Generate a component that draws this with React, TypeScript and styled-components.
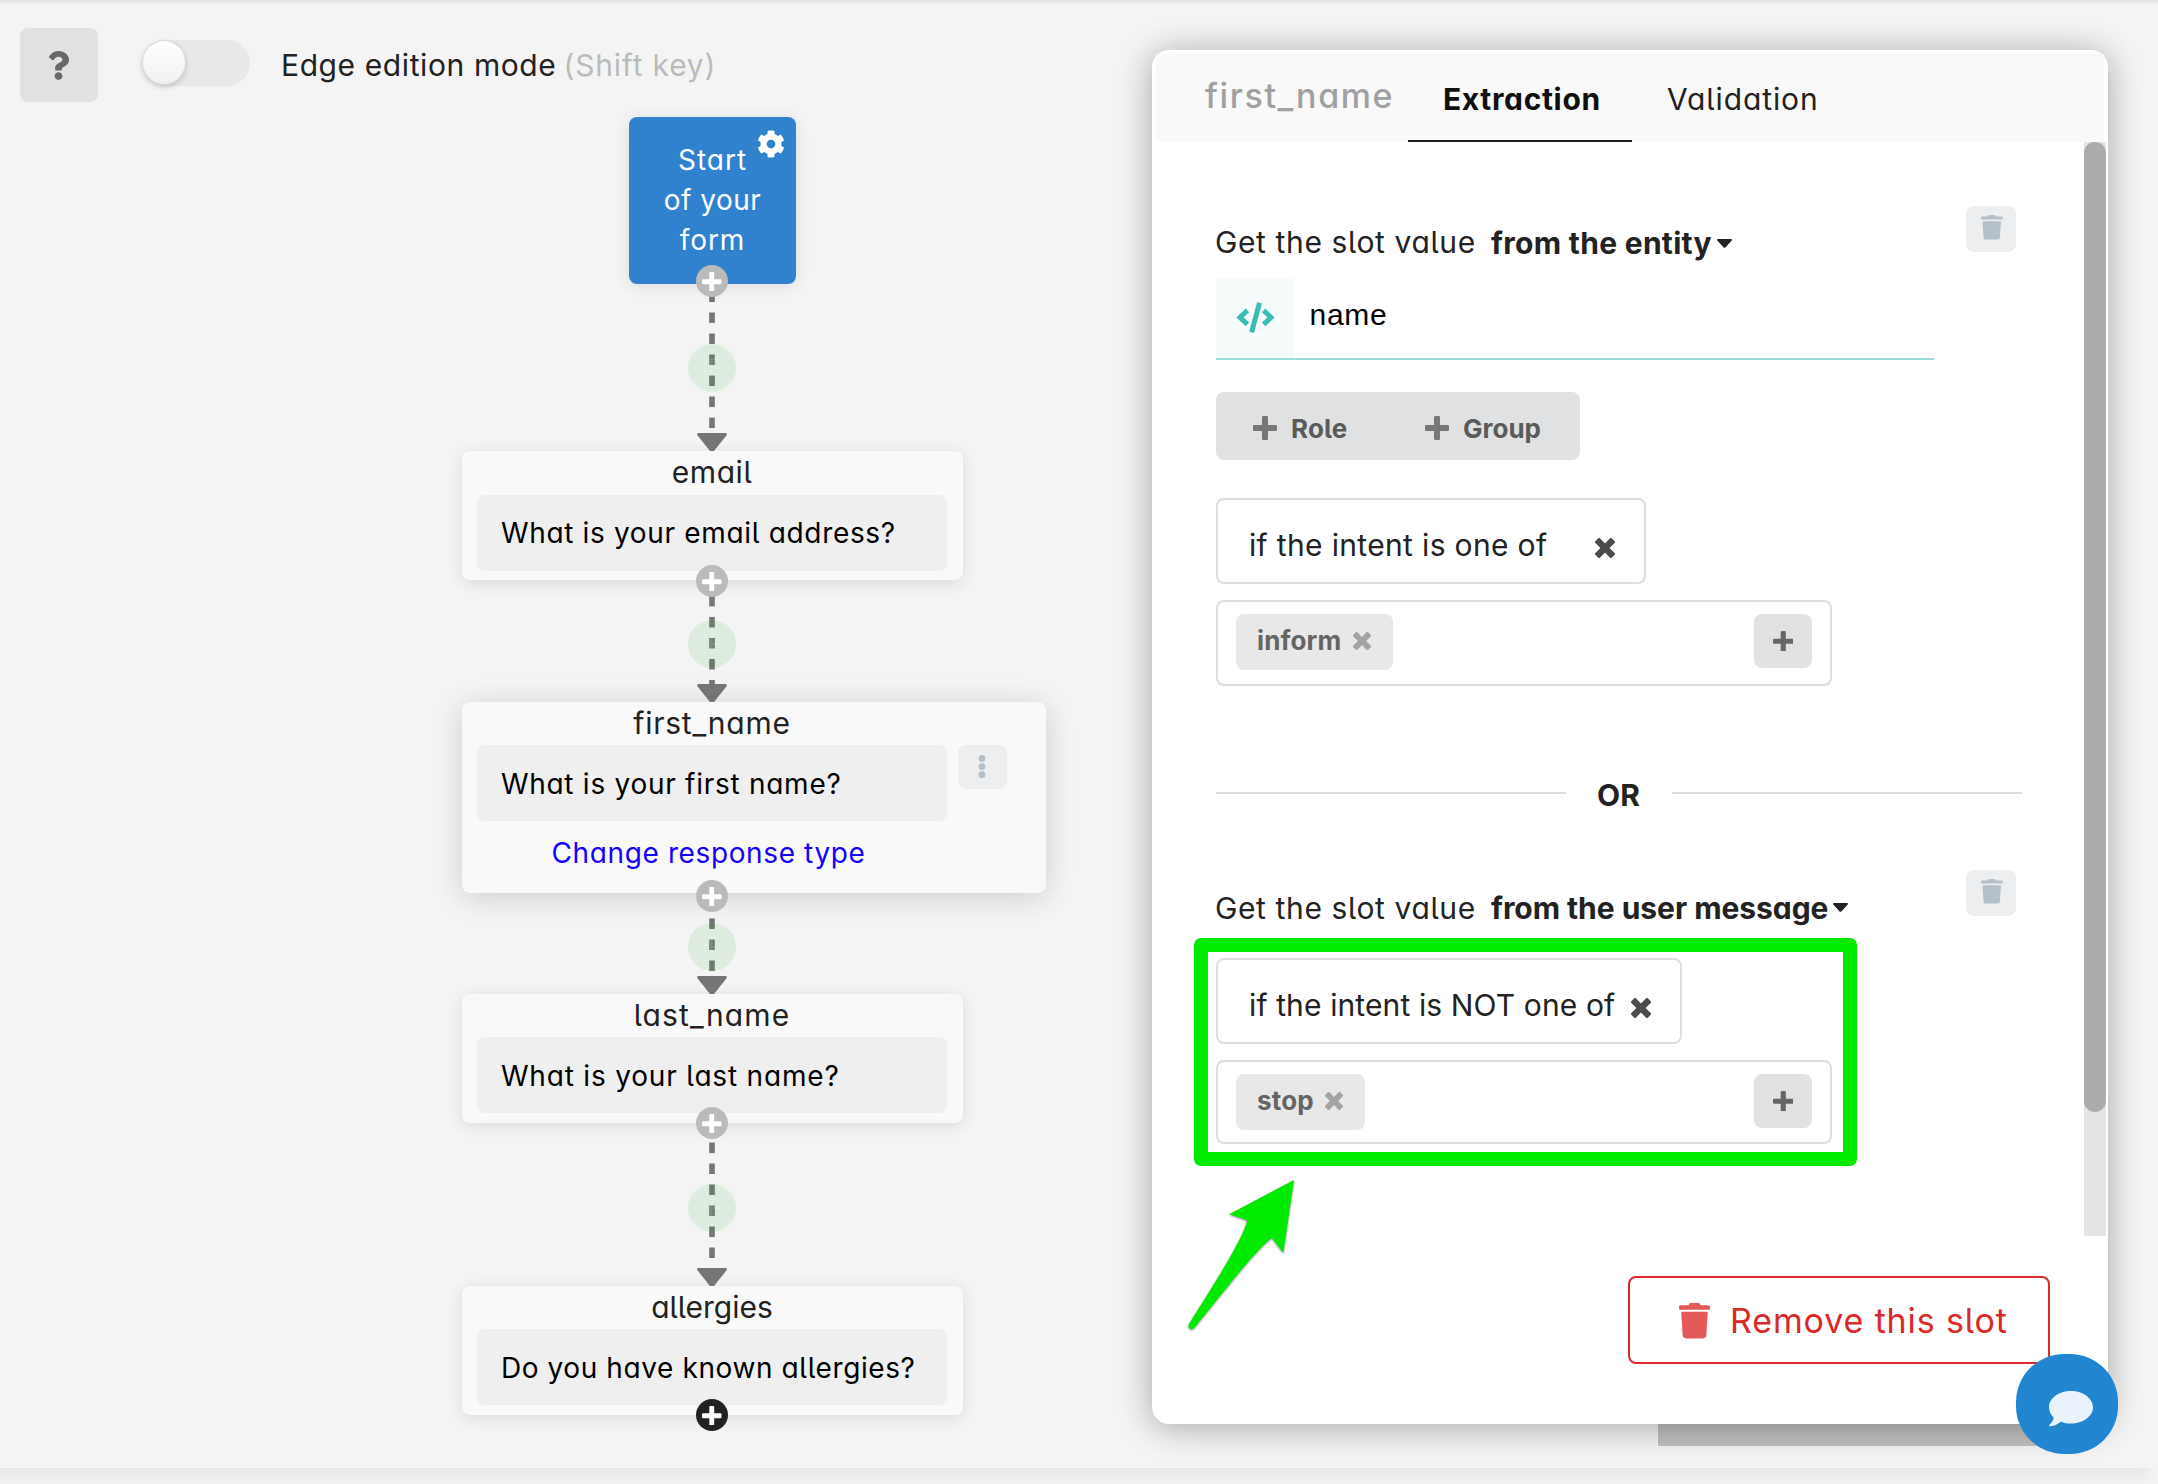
import React from 'react';
import styled, { createGlobalStyle, css } from 'styled-components';
import { FaCog, FaQuestion } from 'react-icons/fa';

const GlobalStyle = createGlobalStyle`
  * { box-sizing: border-box; }
  body {
    margin: 0;
    background: #f4f4f4;
    color: #222;
    font-family: Inter, 'Open Sans', sans-serif;
    font-feature-settings: 'cv11', 'cv05';
  }
  svg { display: block; flex: none; }
`;

/* ---------- text ---------- */

const Text = styled.span<{ $size?: number; $weight?: number; $track?: number; $color?: string }>`
  font-size: ${(p) => p.$size ?? 30}px;
  font-weight: ${(p) => p.$weight ?? 400};
  letter-spacing: ${(p) => p.$track ?? 0}px;
  color: ${(p) => p.$color ?? 'inherit'};
  line-height: 40px;
  white-space: nowrap;
`;

const Hint = styled(Text)`
  margin-left: -2px;
`;

/* ---------- icons ---------- */

const PlusIcon = ({ size, color }: { size: number; color: string }) => (
  <svg width={size} height={size} viewBox="0 0 24 24" fill={color}>
    <rect x="9" y="0" width="6" height="24" rx="1.3" />
    <rect x="0" y="9" width="24" height="6" rx="1.3" />
  </svg>
);

const TimesIcon = ({ size, color }: { size: number; color: string }) => (
  <svg width={size} height={size} viewBox="0 64 384 384" fill={color}>
    <path d="M323.1 441l53.9-53.9c9.4-9.4 9.4-24.5 0-33.9L279.8 256l97.2-97.2c9.4-9.4 9.4-24.5 0-33.9L323.1 71c-9.4-9.4-24.5-9.4-33.9 0L192 168.2 94.8 71c-9.4-9.4-24.5-9.4-33.9 0L7 124.9c-9.4 9.4-9.4 24.5 0 33.9l97.2 97.2L7 353.2c-9.4 9.4-9.4 24.5 0 33.9L60.9 441c9.4 9.4 24.5 9.4 33.9 0l97.2-97.2 97.2 97.2c9.3 9.3 24.5 9.3 33.9 0z" />
  </svg>
);

const TrashIcon = ({ width, color }: { width: number; color: string }) => (
  <svg width={width} height={(width * 512) / 448} viewBox="0 0 448 512" fill={color}>
    <path d="M0 84V56c0-13.3 10.7-24 24-24h112l9.4-18.7c4-8.2 12.3-13.3 21.4-13.3h114.3c9.1 0 17.4 5.1 21.5 13.3L312 32h112c13.3 0 24 10.7 24 24v28c0 6.6-5.4 12-12 12H12C5.4 96 0 90.6 0 84zm415.2 56.7L394.8 467c-1.6 25.3-22.6 45-47.9 45H101.1c-25.3 0-46.3-19.7-47.9-45L32.8 140.7c-.4-6.9 5.1-12.7 12-12.7h358.5c6.8 0 12.3 5.8 11.9 12.7z" />
  </svg>
);

const CodeIcon = () => (
  <svg width="39" height="32" viewBox="0 0 39 32" fill="none" stroke="#3bbcb6" strokeWidth="5">
    <path d="M11.4 8.4 4 15.4l7.4 7" />
    <path d="M27.6 8.4 35 15.4l-7.4 7" />
    <path d="M23.5 0.8 15.6 30.4" />
  </svg>
);

const CaretIcon = () => (
  <svg width="15" height="9" viewBox="0 0 15 9" fill="#222">
    <path d="M.9 0h13.2c.8 0 1.2.9.6 1.5L8.6 8.2c-.6.7-1.6.7-2.2 0L.3 1.5C-.3.9.1 0 .9 0z" />
  </svg>
);

const DotsIcon = () => (
  <svg width="8" height="28" viewBox="0 0 8 28" fill="#b3c0c9">
    <circle cx="4" cy="5.5" r="3.4" />
    <circle cx="4" cy="13.6" r="3.4" />
    <circle cx="4" cy="21.7" r="3.4" />
  </svg>
);

const ChatIcon = () => (
  <svg width="44" height="36" viewBox="0 0 44 36" fill="#eaf3fb">
    <path d="M22 0C34.2 0 44 7.3 44 16.3S34.2 32.6 22 32.6c-3.8 0-7.3-.7-10.3-1.9C8.8 33 4.8 35.3.8 35.3c-.8 0-.9-.7-.4-1.2 1.700-1.800 4-4.900 4.300-7.600C1.700 23.700 0 20.200 0 16.300 0 7.300 9.800 0 22 0z" />
  </svg>
);

/* ---------- page ---------- */

const Page = styled.div`
  position: relative;
  width: 2158px;
  height: 1484px;
  display: flex;
  overflow: hidden;
  background: #f4f4f4;
`;

const TopShade = styled.div`
  position: absolute;
  inset: 0 0 auto 0;
  height: 5px;
  background: linear-gradient(#e2e2e2, #e8e8e8 40%, #f4f4f4);
`;

const BottomShade = styled.div`
  position: absolute;
  inset: auto 0 0 0;
  height: 16px;
  background: linear-gradient(to right, transparent 2140px, #f4f4f4),
    linear-gradient(#e5e5e5, #ebebeb 30%, #f2f2f2);
`;

const Canvas = styled.main`
  position: relative;
  width: 1152px;
  flex: none;
`;

const Toolbar = styled.div`
  display: flex;
  align-items: center;
  padding: 28px 0 0 20px;
`;

const HelpButton = styled.button`
  width: 78px;
  height: 74px;
  border: 0;
  border-radius: 8px;
  background: #e0e1e2;
  color: #686868;
  padding: 0 1px 0 0;
  display: flex;
  align-items: center;
  justify-content: center;
  margin-right: 45px;
`;

const Toggle = styled.div`
  width: 107px;
  height: 46px;
  border-radius: 23px;
  background: #e8e8e8;
  margin: 0 31px 4px 0;
`;

const Knob = styled.div`
  width: 44px;
  height: 45px;
  margin-left: -1px;
  border-radius: 50%;
  background: linear-gradient(#fff, #f1f1f1);
  border: 1px solid #d8d8d8;
  box-shadow: 0 2px 5px rgba(34, 36, 38, 0.22);
`;

/* ---------- diagram ---------- */

const nodeBox = css<{ $top: number }>`
  position: absolute;
  top: ${(p) => p.$top}px;
  border-radius: 8px;
`;

const StartNode = styled.div<{ $top: number }>`
  ${nodeBox}
  left: 629px;
  width: 167px;
  height: 167px;
  padding-top: 23px;
  background: #3182ce;
  color: #fff;
  display: flex;
  flex-direction: column;
  align-items: center;
  box-shadow: 0 2px 16px rgba(0, 0, 0, 0.1);
`;

const Gear = styled.div`
  position: absolute;
  top: 13px;
  right: 11px;
`;

const Card = styled.section<{ $top: number; $active?: boolean }>`
  ${nodeBox}
  left: 461.5px;
  width: ${(p) => (p.$active ? 584.5 : 501.5)}px;
  height: ${(p) => (p.$active ? 191.7 : 129)}px;
  padding-left: 15px;
  background: #f9f9f9;
  box-shadow: ${(p) =>
    p.$active ? '0 4px 30px rgba(0,0,0,.16)' : '0 3px 16px rgba(0,0,0,.11)'};
`;

const CardTitle = styled.div`
  width: 471px;
  height: 43.7px;
  padding-top: 1.4px;
  text-align: center;
`;

const CardRow = styled.div`
  display: flex;
  gap: 10.5px;
`;

const Question = styled.div`
  width: 470.5px;
  height: 76px;
  border-radius: 8px;
  background: #efefef;
  color: #000;
  padding: 18.6px 0 0 24.4px;
`;

const MenuButton = styled.button`
  width: 49px;
  height: 44px;
  border: 0;
  padding: 0;
  border-radius: 8px;
  background: #eceef0;
  display: flex;
  align-items: center;
  justify-content: center;
`;

const ChangeLink = styled.a`
  display: block;
  padding: 11.4px 0 0 75px;
`;

const AddBadge = styled.div<{ $top: number; $dark?: boolean }>`
  position: absolute;
  left: 696px;
  top: ${(p) => p.$top}px;
  width: 32px;
  height: 32px;
  border-radius: 50%;
  background: ${(p) => (p.$dark ? '#222' : '#bababa')};
  display: flex;
  align-items: center;
  justify-content: center;
`;

const EdgeBox = styled.div<{ $top: number }>`
  position: absolute;
  left: 688px;
  top: ${(p) => p.$top}px;
`;

const ConditionDot = styled.div<{ $top: number }>`
  position: absolute;
  left: 688px;
  top: ${(p) => p.$top}px;
  width: 48px;
  height: 48px;
  border-radius: 50%;
  background: rgba(33, 176, 59, 0.11);
  display: flex;
  align-items: center;
  justify-content: center;
`;

/* A dashed connector; dashes are laid out upwards from `dash`. */
const Edge = ({ top, bottom, dash }: { top: number; bottom: number; dash: number }) => {
  const h = bottom - top;
  return (
    <EdgeBox $top={top}>
      <svg width="48" height={h} viewBox={`0 0 48 ${h}`}>
        <path
          d={`M24 ${h - 12}V0`}
          stroke="#757575"
          strokeWidth="5.6"
          strokeDasharray="10.6 10.4"
          strokeDashoffset={dash}
        />
        <path
          d={`M10.5 ${h - 18}h27c1.3 0 1.8 1.2 1.1 2.2L26 ${h}h-4L9.4 ${h - 15.8}c-.7-1-.2-2.2 1.1-2.2z`}
          fill="#757575"
        />
      </svg>
    </EdgeBox>
  );
};

/* ---------- slot panel ---------- */

const Panel = styled.aside`
  position: relative;
  width: 956px;
  height: 1374px;
  margin-top: 50px;
  padding: 4px;
  border-radius: 17px;
  background: #fff;
  box-shadow: 0 3px 34px rgba(0, 0, 0, 0.33);
`;

const PanelHeader = styled.header`
  height: 88px;
  background: #f9f9f9;
  display: flex;
  align-items: stretch;
`;

const SlotName = styled.div`
  width: 252px;
  padding: 22px 0 0 49px;
`;

const Tab = styled.div<{ $active?: boolean }>`
  padding: 25px 35px 0;
  ${(p) => p.$active && css`width: 224px; text-align: center; border-bottom: 2px solid #1b1c1d;`}
`;

const PanelBody = styled.div`
  height: 1094px;
  margin-right: -2px;
  display: flex;
  justify-content: space-between;
`;

const Rules = styled.div`
  width: 867px;
  padding: 64px 0 0 60px;
`;

const ScrollTrack = styled.div`
  width: 22px;
  background: #e4e4e4;
`;

const ScrollThumb = styled.div`
  height: 970px;
  border-radius: 11px;
  background: #ababab;
`;

const Rule = styled.section`
  display: flex;
`;

const RuleMain = styled.div`
  width: 750px;
  display: flex;
  flex-direction: column;
  align-items: flex-start;
`;

const RuleHead = styled.div<{ $height: number; $lift?: number }>`
  height: ${(p) => p.$height}px;
  padding-bottom: ${(p) => p.$lift ?? 0}px;
  display: flex;
  align-items: center;
`;

const RuleLabel = styled.div`
  width: 276px;
  margin-left: -1px;
  flex: none;
`;

const SourceSelect = styled.div<{ $shift: number }>`
  display: flex;
  align-items: center;
  gap: 5px;
  padding-top: ${(p) => (p.$shift > 0 ? p.$shift : 0)}px;
  padding-bottom: ${(p) => (p.$shift < 0 ? -p.$shift : 0)}px;
`;

const TrashButton = styled.button`
  width: 50px;
  height: 46px;
  border: 0;
  border-radius: 8px;
  padding: 0 0 3px 2px;
  background: #eceef0;
  display: flex;
  align-items: center;
  justify-content: center;
`;

const EntityField = styled.div`
  width: 718px;
  height: 82px;
  border-bottom: 2px solid #99dbd6;
  display: flex;
  align-items: center;
`;

const EntityIcon = styled.div`
  width: 78px;
  height: 80px;
  background: #f6fcfc;
  display: flex;
  align-items: center;
  justify-content: center;
`;

const EntityValue = styled.span`
  padding: 0 0 6px 15.6px;
  font: 30px/40px 'Liberation Sans', Arial, sans-serif;
  letter-spacing: 0.7px;
  color: #000;
`;

const ButtonGroup = styled.div`
  width: 364px;
  height: 68px;
  margin: 32px 0 38px;
  padding: 4px 0 0 37px;
  border-radius: 8px;
  background: #e0e1e2;
  color: #5a5a5a;
  display: flex;
  align-items: center;
`;

const GroupButton = styled.div`
  width: 172px;
  flex: none;
  display: flex;
  align-items: center;
  gap: 14px;
  ${Text} { padding-top: 2px; }
`;

const Condition = styled.div<{ $width: number }>`
  width: ${(p) => p.$width}px;
  height: 86px;
  margin-bottom: 16px;
  padding: 8px 29px 0 31px;
  border: 2px solid #dedede;
  border-radius: 8px;
  display: flex;
  align-items: center;
  justify-content: space-between;
  svg { margin-top: 6px; }
`;

const IntentBox = styled.div<{ $height: number }>`
  width: 616px;
  height: ${(p) => p.$height}px;
  padding: 12px 18px;
  border: 2px solid #dedede;
  border-radius: 8px;
  display: flex;
  justify-content: space-between;
`;

const IntentLabel = styled.div`
  height: 56px;
  padding: 0 22px 3px 21px;
  border-radius: 8px;
  background: #e8e8e8;
  color: #646464;
  display: flex;
  align-items: center;
  gap: 11.5px;
`;

const AddIntent = styled.button`
  width: 58px;
  height: 54px;
  border: 0;
  padding: 0;
  border-radius: 8px;
  background: #e0e1e2;
  display: flex;
  align-items: center;
  justify-content: center;
`;

const OrDivider = styled.div`
  width: 806px;
  height: 184px;
  padding: 34px 0 0;
  display: flex;
  align-items: center;
  justify-content: space-between;
`;

const OrLine = styled.div`
  width: 350px;
  height: 2px;
  margin-bottom: 4px;
  background: #dcdcdc;
`;

const OrText = styled(Text)`
  margin-right: 1px;
`;

const PanelFooter = styled.footer`
  display: flex;
  justify-content: flex-end;
  padding: 40px 54px 0 0;
`;

const RemoveButton = styled.button`
  width: 422px;
  height: 88px;
  padding: 2px 0 0 49px;
  border: 2px solid #db2828;
  border-radius: 8px;
  background: #fff;
  font-family: inherit;
  font-feature-settings: inherit;
  display: flex;
  align-items: center;
  gap: 20px;
`;

/* ---------- overlays ---------- */

const HorizontalThumb = styled.div`
  position: absolute;
  left: 1658px;
  top: 1420px;
  width: 400px;
  height: 26px;
  background: #c1c1c1;
`;

const Highlight = styled.div`
  position: absolute;
  left: 1194px;
  top: 938px;
  width: 663px;
  height: 228px;
  border: 14px solid #00ea00;
  border-radius: 7px;
`;

const Arrow = styled.svg`
  position: absolute;
  left: 1180px;
  top: 1170px;
  filter: drop-shadow(0 1px 1px rgba(0, 0, 0, 0.45));
`;

const ChatButton = styled.button`
  position: absolute;
  left: 2016px;
  top: 1354px;
  width: 102px;
  height: 100px;
  border: 0;
  border-radius: 48px;
  background: #2185d0;
  padding: 10px 0 0 7px;
  display: flex;
  align-items: center;
  justify-content: center;
`;

const cards = [
  { top: 451, name: 'email', track: 0.6, question: 'What is your email address?', qTrack: 0.67 },
  { top: 701.6, name: 'first_name', track: 0.75, question: 'What is your first name?', qTrack: 0.73, active: true },
  { top: 993.7, name: 'last_name', track: 1.15, question: 'What is your last name?', qTrack: 0.82 },
  { top: 1285.7, name: 'allergies', track: 0, question: 'Do you have known allergies?', qTrack: 0.6 },
];

const edges = [
  { top: 284, bottom: 451, dash: -11, dot: 344 },
  { top: 580, bottom: 702, dash: 0.6, dot: 619.5 },
  { top: 914, bottom: 994, dash: -11, dot: 922.5 },
  { top: 1141, bottom: 1286, dash: 5, dot: 1183.5 },
];

const badges = [
  { top: 265.3 },
  { top: 565.3 },
  { top: 880.3 },
  { top: 1107.3 },
  { top: 1399.3, dark: true },
];

export default function App() {
  return (
    <>
      <GlobalStyle />
      <Page>
        <TopShade />
        <BottomShade />
        <HorizontalThumb />
        <Canvas>
          <Toolbar>
            <HelpButton>
              <FaQuestion size={29} />
            </HelpButton>
            <Toggle>
              <Knob />
            </Toggle>
            <Text $track={0.6}>
              Edge edition mode <Hint $track={0.8} $color="#bbb">(Shift key)</Hint>
            </Text>
          </Toolbar>

          <StartNode $top={117}>
            <Text $size={28} $track={1}>Start</Text>
            <Text $size={28} $track={0.5}>of your</Text>
            <Text $size={28} $track={0.9}>form</Text>
            <Gear>
              <FaCog size={28} />
            </Gear>
          </StartNode>

          {cards.map((c) => (
            <Card key={c.name} $top={c.top} $active={c.active}>
              <CardTitle>
                <Text $track={c.track}>{c.name}</Text>
              </CardTitle>
              <CardRow>
                <Question>
                  <Text $size={28} $track={c.qTrack}>{c.question}</Text>
                </Question>
                {c.active && (
                  <MenuButton>
                    <DotsIcon />
                  </MenuButton>
                )}
              </CardRow>
              {c.active && (
                <ChangeLink>
                  <Text $size={28} $track={0.62} $color="#1400ff">Change response type</Text>
                </ChangeLink>
              )}
            </Card>
          ))}

          {edges.map((e) => (
            <React.Fragment key={e.top}>
              <Edge top={e.top} bottom={e.bottom} dash={e.dash} />
              <ConditionDot $top={e.dot}>
                <Text $size={26} $color="rgba(255,255,255,.12)">IF</Text>
              </ConditionDot>
            </React.Fragment>
          ))}

          {badges.map((b) => (
            <AddBadge key={b.top} $top={b.top} $dark={b.dark}>
              <PlusIcon size={19.5} color="#fff" />
            </AddBadge>
          ))}
        </Canvas>

        <Panel>
          <PanelHeader>
            <SlotName>
              <Text $size={34} $weight={500} $track={1.6} $color="#a0a0a0">first_name</Text>
            </SlotName>
            <Tab $active>
              <Text $weight={650} $track={0.65} $color="#0f0f10">Extraction</Text>
            </Tab>
            <Tab>
              <Text $track={0.9}>Validation</Text>
            </Tab>
          </PanelHeader>

          <PanelBody>
            <Rules>
              <Rule>
                <RuleMain>
                  <RuleHead $height={72}>
                    <RuleLabel>
                      <Text $track={0.62}>Get the slot value</Text>
                    </RuleLabel>
                    <SourceSelect $shift={2}>
                      <Text $weight={700} $track={0.3}>from the entity</Text>
                      <CaretIcon />
                    </SourceSelect>
                  </RuleHead>
                  <EntityField>
                    <EntityIcon>
                      <CodeIcon />
                    </EntityIcon>
                    <EntityValue>name</EntityValue>
                  </EntityField>
                  <ButtonGroup>
                    <GroupButton>
                      <PlusIcon size={24} color="#777" />
                      <Text $size={26} $weight={700} $track={0.2}>Role</Text>
                    </GroupButton>
                    <GroupButton>
                      <PlusIcon size={24} color="#777" />
                      <Text $size={26} $weight={700} $track={0}>Group</Text>
                    </GroupButton>
                  </ButtonGroup>
                  <Condition $width={430}>
                    <Text $track={0.34}>if the intent is one of</Text>
                    <TimesIcon size={20} color="#4b4b4b" />
                  </Condition>
                  <IntentBox $height={86}>
                    <IntentLabel>
                      <Text $size={26} $weight={700} $track={0.15}>inform</Text>
                      <TimesIcon size={18} color="#a3a3a3" />
                    </IntentLabel>
                    <AddIntent>
                      <PlusIcon size={20.5} color="#666" />
                    </AddIntent>
                  </IntentBox>
                </RuleMain>
                <TrashButton>
                  <TrashIcon width={21.5} color="#b3c0c9" />
                </TrashButton>
              </Rule>

              <OrDivider>
                <OrLine />
                <OrText $weight={700}>OR</OrText>
                <OrLine />
              </OrDivider>

              <Rule>
                <RuleMain>
                  <RuleHead $height={88} $lift={12}>
                    <RuleLabel>
                      <Text $track={0.62}>Get the slot value</Text>
                    </RuleLabel>
                    <SourceSelect $shift={-1}>
                      <Text $weight={700} $track={-0.04}>from the user message</Text>
                      <CaretIcon />
                    </SourceSelect>
                  </RuleHead>
                  <Condition $width={466}>
                    <Text $track={0.12}>if the intent is NOT one of</Text>
                    <TimesIcon size={20} color="#4b4b4b" />
                  </Condition>
                  <IntentBox $height={84}>
                    <IntentLabel>
                      <Text $size={26} $weight={700} $track={0.2}>stop</Text>
                      <TimesIcon size={18} color="#a3a3a3" />
                    </IntentLabel>
                    <AddIntent>
                      <PlusIcon size={20.5} color="#666" />
                    </AddIntent>
                  </IntentBox>
                </RuleMain>
                <TrashButton>
                  <TrashIcon width={21.5} color="#b3c0c9" />
                </TrashButton>
              </Rule>
            </Rules>
            <ScrollTrack>
              <ScrollThumb />
            </ScrollTrack>
          </PanelBody>

          <PanelFooter>
            <RemoveButton>
              <TrashIcon width={31} color="#e45959" />
              <Text $size={34} $track={0.87} $color="#db2828">Remove this slot</Text>
            </RemoveButton>
          </PanelFooter>
        </Panel>

        <Highlight />
        <Arrow width="130" height="170" viewBox="0 0 130 170" fill="#00ea00">
          <path d="M114 10 49.3 44.3 67.3 50.3C62 72 30 120 8.7 154.5c-1.5 4 3.3 6.5 5.8 3C40 127 70 86 91.7 67.7L103.3 83z" />
        </Arrow>
        <ChatButton>
          <ChatIcon />
        </ChatButton>
      </Page>
    </>
  );
}
